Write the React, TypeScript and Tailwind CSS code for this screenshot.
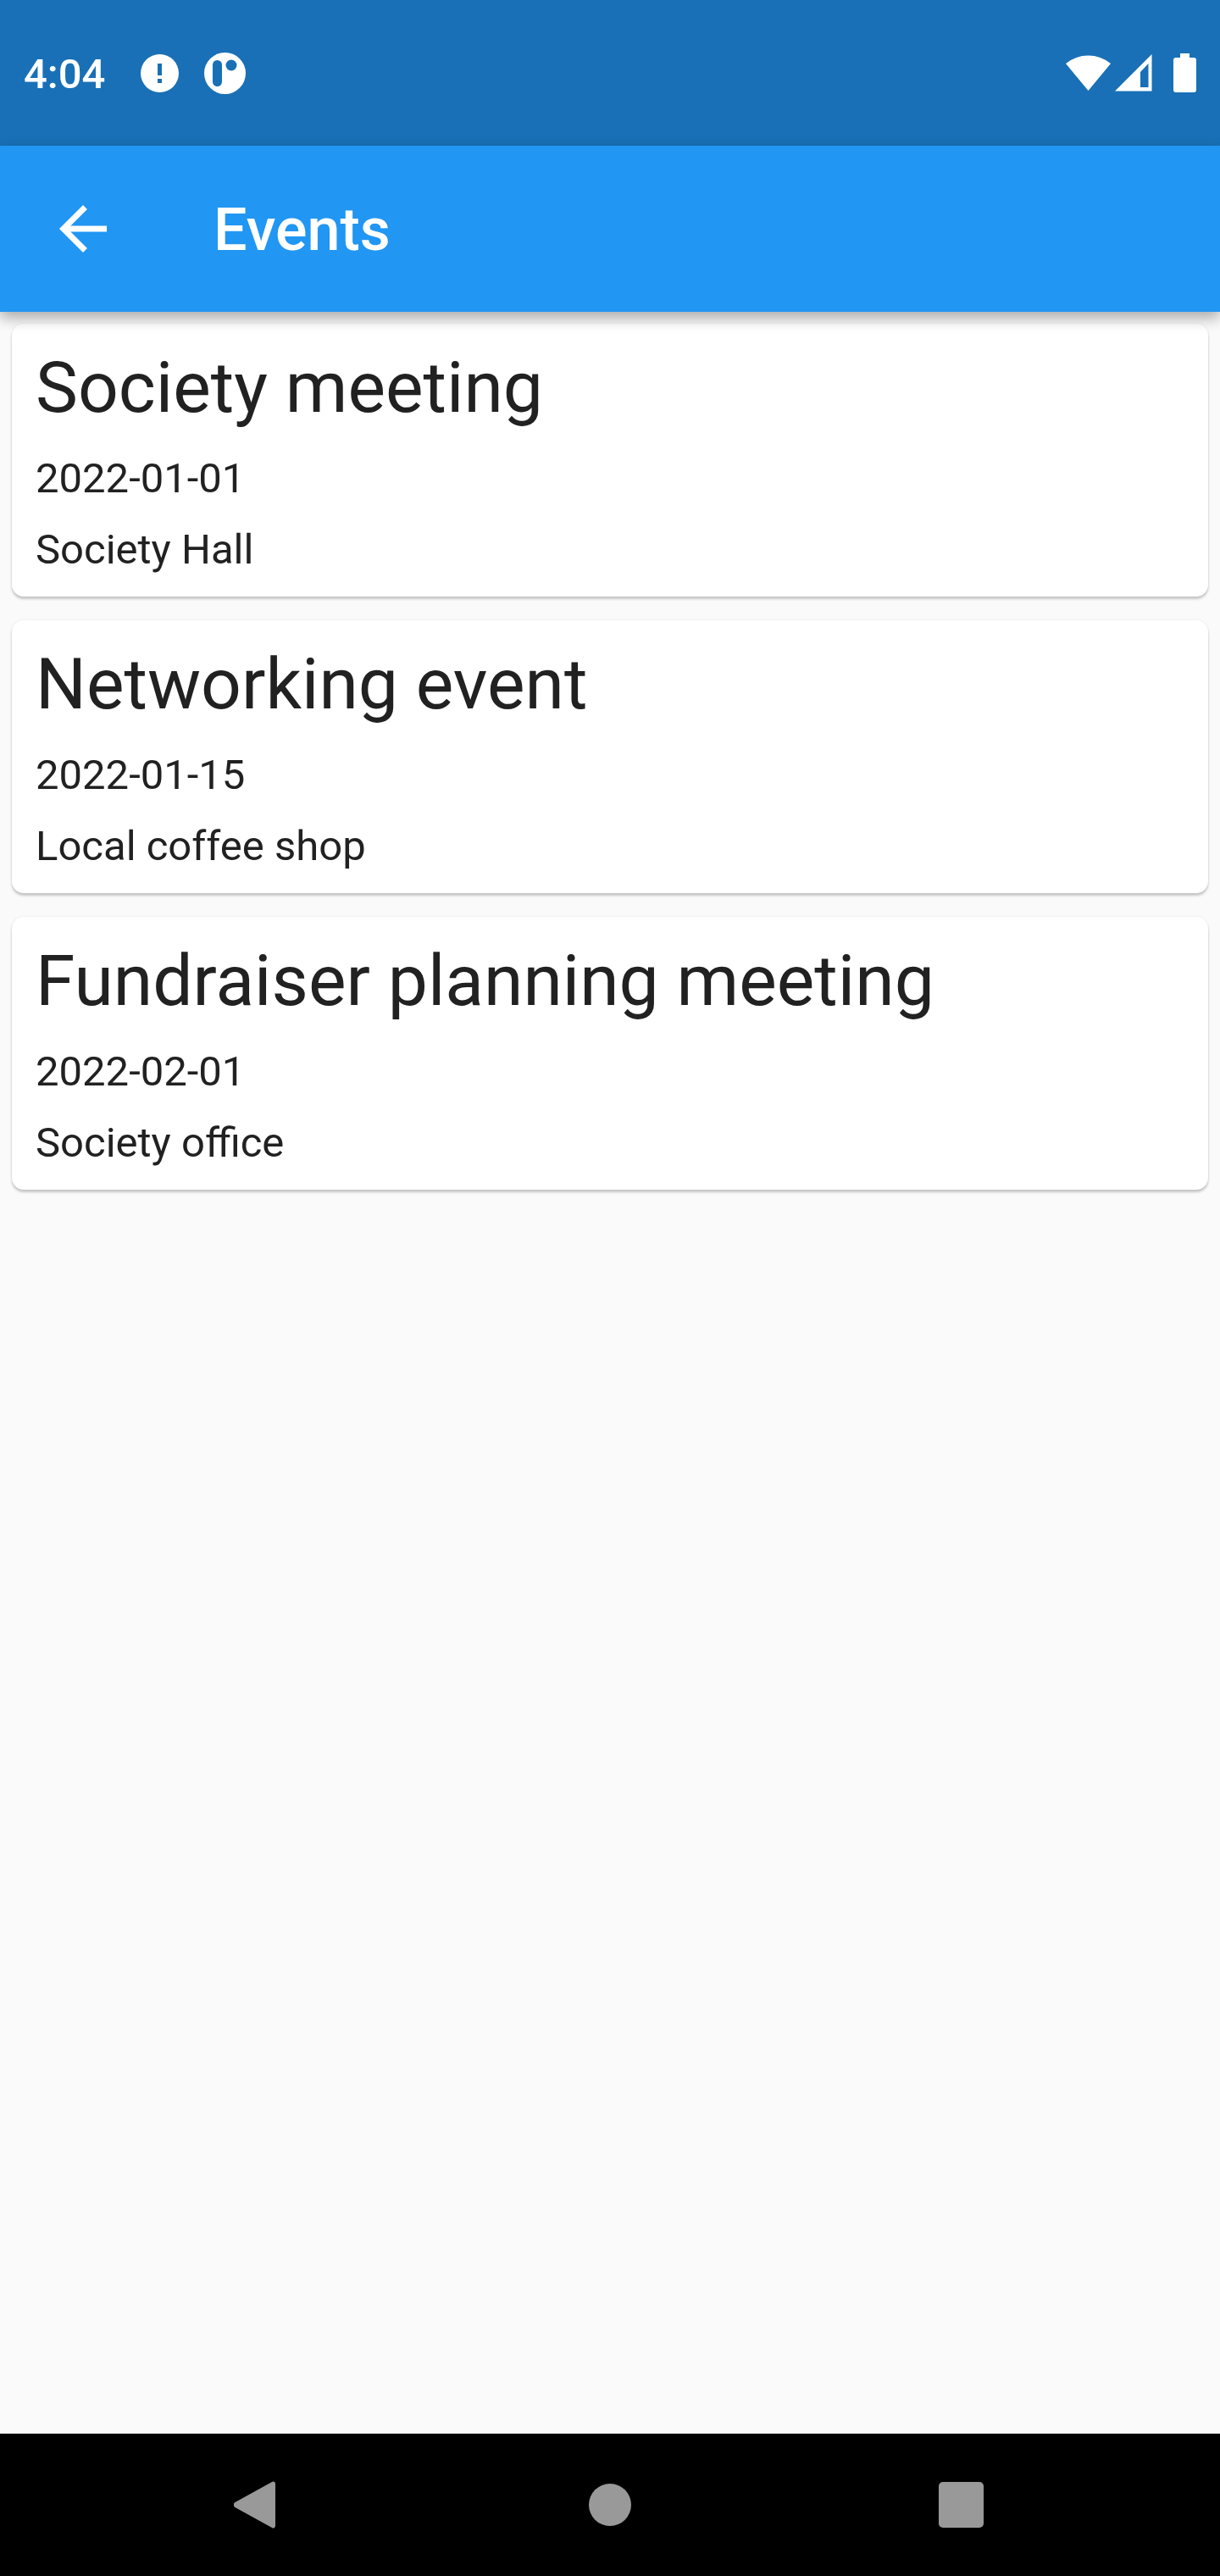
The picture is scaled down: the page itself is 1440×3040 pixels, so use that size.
import React from 'react';

const events = [
  { title: 'Society meeting', date: '2022-01-01', place: 'Society Hall' },
  { title: 'Networking event', date: '2022-01-15', place: 'Local coffee shop' },
  { title: 'Fundraiser planning meeting', date: '2022-02-01', place: 'Society office' },
];

const StatusBar = () => (
  <div className="h-[172px] shrink-0 bg-[#1970B6] flex items-center text-white">
    <span className="ml-[28px] mt-[4px] w-[97px] text-[49px] leading-[58px] font-medium">4:04</span>
    {/* notification icons */}
    <svg className="ml-[41px] mt-[1px]" width="45" height="45" viewBox="0 0 45 45">
      <circle cx="22.5" cy="22.5" r="22.5" fill="white" />
      <rect x="20" y="11" width="5" height="14" fill="#1970B6" />
      <rect x="20" y="29" width="5" height="5" fill="#1970B6" />
    </svg>
    <svg className="ml-[30px]" width="49" height="49" viewBox="0 0 49 49">
      <circle cx="24.5" cy="24.5" r="24.5" fill="white" />
      <rect x="10" y="9" width="11" height="31" rx="5.5" fill="#1970B6" />
      <circle cx="32" cy="15" r="6.5" fill="#1970B6" />
    </svg>
    <div className="flex-1" />
    {/* wifi, signal, battery */}
    <svg className="mb-[2px]" width="53" height="44" viewBox="0 0 53 44">
      <path d="M0 12A42 42 0 0 1 53 12L26.5 44Z" fill="white" />
    </svg>
    <svg className="ml-[5px]" width="44" height="44" viewBox="0 0 44 44">
      <path fillRule="evenodd" d="M0 43.5L43.5 0V43.5ZM30 21L39.5 11V39H30Z" fill="white" />
    </svg>
    <svg className="ml-[25px] mr-[28px]" width="27" height="46" viewBox="0 0 27 46">
      <path d="M8 0H19V5H24A3 3 0 0 1 27 8V43A3 3 0 0 1 24 46H3A3 3 0 0 1 0 43V8A3 3 0 0 1 3 5H8Z" fill="white" />
    </svg>
  </div>
);

const AppBar = () => (
  <div className="relative z-10 h-[196px] shrink-0 bg-[#2196F3] flex items-center shadow-[0_7px_16px_rgba(0,0,0,0.33)]">
    <svg className="ml-[56px]" width="84" height="84" viewBox="0 0 24 24" fill="white">
      <path d="M20 11H7.83l5.59-5.59L12 4l-8 8 8 8 1.41-1.41L7.83 13H20v-2z" />
    </svg>
    <h1 className="ml-[112px] mt-[2px] text-[70px] leading-[82px] font-medium text-white">Events</h1>
  </div>
);

const EventCard = ({ title, date, place }: { title: string; date: string; place: string }) => (
  <div className="bg-white rounded-[14px] px-[28px] pt-[27px] pb-[27px] shadow-[0_3px_3px_rgba(0,0,0,0.2),0_0_3px_rgba(0,0,0,0.08)] text-[#212121]">
    <div className="text-[84px] leading-[98px]">{title}</div>
    <div className="mt-[30px] text-[49px] leading-[56px]">{date}</div>
    <div className="mt-[28px] text-[49px] leading-[56px]">{place}</div>
  </div>
);

const NavBar = () => (
  <div className="h-[168px] shrink-0 bg-black flex items-center pl-[276px]">
    <svg width="49" height="56" viewBox="0 0 49 56" fill="#999999">
      <path d="M45 1L1.5 25A3.5 3.5 0 0 0 1.5 31L45 55A2.5 2.5 0 0 0 49 53V3A2.5 2.5 0 0 0 45 1Z" />
    </svg>
    <div className="ml-[370px] w-[50px] h-[50px] rounded-full bg-[#999999]" />
    <div className="ml-[363px] w-[53px] h-[54px] rounded-[5px] bg-[#999999]" />
  </div>
);

export default function App() {
  return (
    <div className="h-[3040px] flex flex-col bg-[#FAFAFA] font-['Roboto',sans-serif]">
      <StatusBar />
      <AppBar />
      <main className="flex-1 flex flex-col gap-[28px] px-[14px] pt-[14px]">
        {events.map((e) => (
          <EventCard key={e.title} {...e} />
        ))}
      </main>
      <NavBar />
    </div>
  );
}
